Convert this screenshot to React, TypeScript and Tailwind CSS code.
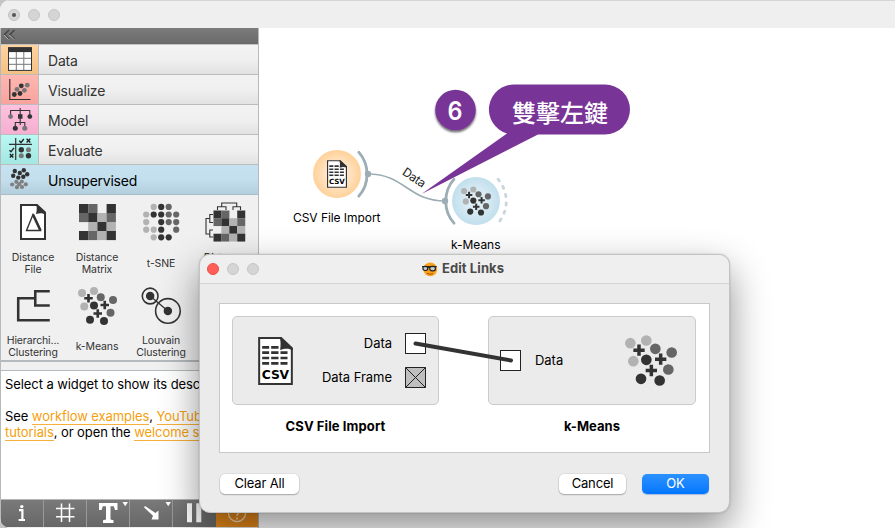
import React from "react";

const ui = "font-['Inter','Noto_Sans_CJK_TC',sans-serif]";

function KMeansIcon({ className }: { className: string }) {
  const dots: [number, number, string][] = [
    [482, 295, "#b2b2b2"], [530, 287, "#b2b2b2"], [491, 349, "#b2b2b2"],
    [557, 312, "#666"], [606, 323, "#666"], [596, 374, "#666"],
    [530, 345, "#333"], [514, 402, "#333"], [570, 407, "#333"],
  ];
  return (
    <svg viewBox="466 271 156 152" className={className}>
      {dots.map(([x, y, c]) => <circle key={`${x}-${y}`} cx={x} cy={y} r="16" fill={c} />)}
      <path d="M508 299v34M491 316h34M573 326v34M556 343h34M545 360v34M528 377h34" stroke="#333" strokeWidth="10.5" />
    </svg>
  );
}

function CsvIcon({ className }: { className: string }) {
  return (
    <svg viewBox="0 0 104 144" className={className}>
      <path d="M3 3H67L101 35V141H3Z" fill="#fff" stroke="#333" strokeWidth="6" />
      <path d="M64 0H70L104 32V40C92 33 80 34 66 39C68 24 68 10 64 0Z" fill="#333" />
      <path d="M12 31H33M39 31H61M12 47H33M39 47H61M67 47H88M12 63H33M39 63H61M67 63H88M12 79H33M39 79H61M67 79H88" stroke="#333" strokeWidth="8" />
      <text x="52" y="126" textAnchor="middle" textLength="82" fontFamily="DejaVu Sans" fontWeight="700" fontSize="37" fill="#000">CSV</text>
    </svg>
  );
}

function MatrixCells() {
  const rows = [
    ["#333", "#666", "", "#333"],
    ["#666", "#333", "#b2b2b2", "#666"],
    ["", "#b2b2b2", "#333", "#b2b2b2"],
    ["#333", "#666", "#b2b2b2", "#333"],
  ];
  return (
    <>
      {rows.flatMap((r, j) => r.map((c, i) => c && <rect key={`${i}${j}`} x={i * 9.2} y={j * 9} width="9.3" height="9.1" fill={c} />))}
    </>
  );
}

const DataIcon = () => (
  <svg width="37" height="29" viewBox="1 46 37 29">
    <rect x="8.5" y="48.8" width="23" height="22.6" fill="#fff" stroke="#333" />
    <rect x="8" y="48.3" width="24" height="4.8" fill="#333" />
    <path d="M16.3 53V71M23.8 53V71M9 59.3H31M9 65.3H31" stroke="#777" strokeWidth="1" />
  </svg>
);
const VisualizeIcon = () => (
  <svg width="37" height="29" viewBox="1 76 37 29">
    <path d="M9.8 80V100.5H30.5" fill="none" stroke="#333" strokeWidth="1.2" />
    {[[14.3, 95.5], [20, 94.5], [21.3, 86.8]].map(([x, y]) => <circle key={x} cx={x} cy={y} r="2.4" fill="#333" />)}
    {[[17, 90.3], [24.4, 91.3], [27.3, 86.2]].map(([x, y]) => <circle key={x} cx={x} cy={y} r="2.4" fill="#777" />)}
  </svg>
);
const ModelIcon = () => (
  <svg width="37" height="29" viewBox="1 106 37 29">
    <path d="M10.6 117V111.5H29.8V117M20.2 109V126M15.3 128V123.5H24.8V128" fill="none" stroke="#333" strokeWidth="1.1" />
    <rect x="18" y="115.2" width="4.5" height="4.5" fill="#333" />
    <circle cx="10.6" cy="117.6" r="2.4" fill="#777" />
    <circle cx="29.8" cy="117.6" r="2.4" fill="#333" />
    <circle cx="15.3" cy="129.2" r="2.5" fill="#333" />
    <circle cx="24.8" cy="129.2" r="2.5" fill="#777" />
  </svg>
);
const EvaluateIcon = () => (
  <svg width="37" height="29" viewBox="1 136 37 29">
    <path d="M15.7 139V161M9 145.3H32" stroke="#333" strokeWidth="1.2" />
    <path d="M19.3 141.8L21 143.6L23.8 140M26.6 139.8L30.3 143.4M30.3 139.8L26.6 143.4M9.5 151.3L11 152.8L14 148.8M9.8 155L13.3 158.6M13.3 155L9.8 158.6" fill="none" stroke="#222" strokeWidth="1.4" />
    <circle cx="21.3" cy="150.7" r="2.7" fill="#333" />
    <circle cx="28.5" cy="150.7" r="2.5" fill="#777" />
    <circle cx="21.3" cy="156.8" r="2.5" fill="#777" />
    <circle cx="28.5" cy="156.8" r="2.7" fill="#333" />
  </svg>
);
const UnsupervisedIcon = () => (
  <svg width="37" height="29" viewBox="1 166 37 29">
    {[[14.8, 172], [19.8, 174], [23.8, 171.2], [13.2, 176.8], [18.3, 178.6], [23.3, 177.8], [27.2, 175.2]].map(([x, y]) => <circle key={x} cx={x} cy={y} r="2.2" fill="#333" />)}
    {[[12.2, 185.5], [16.3, 182.8], [21.8, 182.5], [25.8, 185.3], [17, 188.2], [22, 188], [19.2, 185.2]].map(([x, y]) => <circle key={x} cx={x} cy={y} r="2.1" fill="#808080" />)}
  </svg>
);

const categories = [
  { label: "Data", icon: <DataIcon />, tile: "bg-linear-to-b from-[#ffd39f] to-[#f4c183]" },
  { label: "Visualize", icon: <VisualizeIcon />, tile: "bg-linear-to-b from-[#ffb7b1] to-[#f8a29d]" },
  { label: "Model", icon: <ModelIcon />, tile: "bg-linear-to-b from-[#ffc1df] to-[#f5aed0]" },
  { label: "Evaluate", icon: <EvaluateIcon />, tile: "bg-linear-to-b from-[#b9f7f2] to-[#a3e8e3]" },
];

function DistanceFile() {
  return (
    <svg width="44" height="44" viewBox="11 200 44 44">
      <path d="M21 205H37L45 212.5V239H21Z" fill="#fff" stroke="#333" strokeWidth="2" />
      <path d="M36 204L46 213V215C43 213 40 213 36 214C37 210 37 207 36 204Z" fill="#333" />
      <path d="M33 214.5L26.5 230.5H40.5Z" fill="none" stroke="#333" strokeWidth="1.4" />
      <path d="M33 214.5L40.5 230.5" stroke="#333" strokeWidth="2.6" />
    </svg>
  );
}
function DistanceMatrix() {
  return <svg width="44" height="44" viewBox="-4 -4 44 44"><MatrixCells /></svg>;
}
function Tsne() {
  const pts = ["02g 03d 04m", "11g 12d 13d 14m 15m", "21g 23d 24m 25m", "31g 32g 33d 35m", "42g 43d 44d"];
  const col: Record<string, string> = { g: "#b2b2b2", d: "#333", m: "#666" };
  return (
    <svg width="44" height="44" viewBox="139 200 44 44">
      {pts.flatMap((r) => r.split(" ").map((p) => (
        <circle key={p} cx={146.2 + (Number(p[1]) - 1) * 7.5} cy={206.9 + Number(p[0]) * 7.6} r="3.1" fill={col[p[2]]} />
      )))}
    </svg>
  );
}
function DistanceMap() {
  return (
    <svg width="44" height="44" viewBox="203 200 44 44">
      <g transform="translate(213.5 210.5) scale(.86)"><MatrixCells /></g>
      <path d="M217.5 210V206.8H226V210M233 210V206.8H240.5V210M221.7 206.8V203H236.7V206.8M213 214.5H209.8V222.5H213M213 230H209.8V237H213M209.8 218.5H206V234H209.8" fill="none" stroke="#333" strokeWidth="1.1" />
    </svg>
  );
}
function Hierarchical() {
  return (
    <svg width="44" height="44" viewBox="11 284 44 44">
      <path d="M50 291.3H35.3V305.8H50M35.3 298.5H18V320.7H50" fill="none" stroke="#333" strokeWidth="2.6" />
    </svg>
  );
}
function Louvain() {
  return (
    <svg width="44" height="44" viewBox="139 284 44 44">
      <circle cx="150" cy="296.2" r="8" fill="none" stroke="#333" strokeWidth="1.6" />
      <circle cx="168" cy="311.3" r="12.5" fill="none" stroke="#333" strokeWidth="1.6" />
      <path d="M150 296.2L168 311.3" stroke="#333" strokeWidth="1.3" />
      <circle cx="150" cy="296.2" r="4.3" fill="#333" />
      <circle cx="168" cy="311.3" r="4.3" fill="#333" />
    </svg>
  );
}

const widgets = [
  { label: ["Distance", "File"], icon: <DistanceFile /> },
  { label: ["Distance", "Matrix"], icon: <DistanceMatrix /> },
  { label: ["t-SNE"], icon: <Tsne /> },
  { label: ["Distance", "Map"], icon: <DistanceMap /> },
  { label: ["Hierarchi...", "Clustering"], icon: <Hierarchical /> },
  { label: ["k-Means"], icon: <div className="flex size-11 items-center justify-center"><KMeansIcon className="h-[38px] w-[39px]" /></div> },
  { label: ["Louvain", "Clustering"], icon: <Louvain /> },
];

function Sidebar() {
  const link = "text-[#f5a00f] border-b border-[#f7b03c]";
  return (
    <aside className="flex w-[259px] shrink-0 flex-col border-x border-[#b4babd] bg-[#f0f0f0]">
      <div className="h-4 shrink-0 bg-linear-to-b from-[#7c7c7c] to-[#696969]">
        <svg width="20" height="14" viewBox="0 0 20 14">
          <path d="M8 2L3.5 6.5L8 11M13.5 2L9 6.5L13.5 11" fill="none" stroke="#484848" strokeWidth="1.7" />
          <path d="M3 7L7.5 11.5M8.5 7L13 11.5" stroke="#bbb" strokeWidth="1" />
        </svg>
      </div>
      <div className="h-px shrink-0 bg-[#c2c2c2]" />
      {categories.map((c) => (
        <div key={c.label} className="flex h-[30px] shrink-0 border-b border-[#bcbcbc]">
          <div className={`w-[38px] border-r border-[#bcbcbc] ${c.tile}`}>{c.icon}</div>
          <div className="flex flex-1 items-center bg-linear-to-b from-[#f3f3f3] via-[#f0f0f0] to-[#e2e2e2] pl-[9px] pt-px text-[14px] tracking-[-0.22px] text-[#333]">{c.label}</div>
        </div>
      ))}
      <div className="flex h-[30px] shrink-0 items-center border-b border-[#a9bdc8] bg-linear-to-b from-[#c6e2f1] via-[#c3dfee] to-[#b3cedd] text-[14px] tracking-[-0.25px]">
        <UnsupervisedIcon />
        <span className="pl-[10px] pt-px">Unsupervised</span>
      </div>
      <div className="grid h-[167px] shrink-0 grid-cols-[repeat(4,64px)] grid-rows-[84px_81px] border-b-2 border-[#b4babd]">
        {widgets.map((w) => (
          <div key={w.label.join()} className="flex flex-col items-center pt-[5px]">
            {w.icon}
            <div className="mt-[7px] flex h-[26px] flex-col justify-center text-center text-[10.5px] leading-[12px] tracking-[-0.12px] text-[#333]">
              {w.label.map((l) => <span key={l} className="whitespace-nowrap">{l}</span>)}
            </div>
          </div>
        ))}
      </div>
      <div className="h-[9px] shrink-0 border-b border-[#b4babd]" />
      <div className="h-[128px] shrink-0 whitespace-nowrap bg-white pl-[4px] pt-[5px] text-[13px] leading-4 tracking-[-0.08px]">
        <p>Select a widget to show its description.</p>
        <p className="pt-4">See <span className={link}>workflow examples</span>, <span className={link}>YouTube</span></p>
        <p><span className={link}>tutorials</span>, or open the <span className={link}>welcome screen</span>.</p>
      </div>
      <svg className="h-[29px] w-[257px] shrink-0" viewBox="1 499 257 29">
        <defs>
          <linearGradient id="tool" x1="0" y1="0" x2="0" y2="1"><stop stopColor="#7a7a7a" /><stop offset="1" stopColor="#676767" /></linearGradient>
        </defs>
        <path d="M0 499.5H258V527H0Z" fill="url(#tool)" />
        <rect x="216" y="499.5" width="42" height="27.5" fill="#e6891a" />
        <path d="M43.5 500V527M86.5 500V527M129.5 500V527M172.5 500V527" stroke="#999" strokeWidth="1" />
        <path d="M19 510.2H22.4V520M18.6 520H25" fill="none" stroke="#fff" strokeWidth="2.2" />
        <circle cx="21.8" cy="506.6" r="1.7" fill="#fff" />
        <path d="M61.5 503.5V522M69.5 503.5V522M56 508.5H74.5M56 516.8H74.5" stroke="#fff" strokeWidth="1.5" />
        <path d="M99 503H117.5V510H115L113.8 506.2H110.5V519.5L113.5 520.2V523H103V520.2L106 519.5V506.2H102.8L101.6 510H99Z" fill="#fff" />
        <path d="M122.5 502H128L125.2 506.3ZM165.5 502H171L168.2 506.3ZM151.5 519.5H158.5V510.5L155.5 513L145 506L144 507.3L153 515.8Z" fill="#fff" />
        <path d="M187 503.3H192V522.3H187ZM196.3 503.3H201.3V522.3H196.3Z" fill="#fff" />
        <circle cx="237" cy="513" r="8.6" fill="none" stroke="#f8ddb8" strokeWidth="1.3" />
        <path d="M234 511C234 507 240 507 240 511C240 513 237 513 237 516M237 517.5V519.5" fill="none" stroke="#f8ddb8" strokeWidth="1.6" />
      </svg>
    </aside>
  );
}

function Workflow() {
  return (
    <div className="relative flex-1 bg-white">
      <svg width="636" height="500" viewBox="259 28 636 500" className="absolute left-0 top-0">
        <defs>
          <radialGradient id="orange"><stop stopColor="#fff1df" /><stop offset=".45" stopColor="#ffe6c8" /><stop offset="1" stopColor="#ffd199" /></radialGradient>
          <radialGradient id="blue"><stop stopColor="#e7f3f9" /><stop offset=".45" stopColor="#d9ebf4" /><stop offset="1" stopColor="#c1dfed" /></radialGradient>
          <filter id="drop" x="-20%" y="-20%" width="150%" height="150%"><feDropShadow dx="0" dy="2" stdDeviation="1" floodColor="#000" floodOpacity=".6" /></filter>
        </defs>
        <circle cx="337" cy="174" r="24" fill="url(#orange)" />
        <circle cx="476" cy="201" r="24" fill="url(#blue)" />
        <g fill="none" stroke="#9cadb5" strokeLinecap="round">
          <path d="M368 174C405 174 408 201 445 201" strokeWidth="1.7" />
          <path d="M358.8 152.2A33.5 33.5 0 0 1 358.8 196.2M454 179.2A33.5 33.5 0 0 0 454 223.2" strokeWidth="2.8" />
          <path d="M498 179.2A33.5 33.5 0 0 1 498 223.2" stroke="#c8d5da" strokeWidth="2.8" strokeDasharray="2.3 6.2" />
        </g>
        <circle cx="368" cy="174" r="3.2" fill="#9cadb5" /><circle cx="445" cy="201" r="3.2" fill="#9cadb5" />
        <g fontFamily="Inter" fontSize="12" fill="#222">
          <text x="293" y="222.4" textLength="87.5" fill="#000">CSV File Import</text>
          <text x="451" y="249.4" textLength="49.5" fill="#000">k-Means</text>
          <text transform="translate(401.5 174) rotate(34)" fontSize="12" textLength="25">Data</text>
        </g>
        <path d="M515 84.5H605A25 25 0 0 1 605 134.5H538L421.5 194L507 133.5A25 25 0 0 1 515 84.5Z" fill="#783597" />
        <text x="560" y="121.5" textAnchor="middle" fontFamily="Noto Sans CJK TC" fontWeight="500" fontSize="24" textLength="96" fill="#fff">雙擊左鍵</text>
        <circle cx="455.5" cy="110" r="20.3" fill="#783597" filter="url(#drop)" />
        <text x="455" y="120" textAnchor="middle" fontFamily="Inter" fontWeight="600" fontSize="25.5" textLength="15" lengthAdjust="spacingAndGlyphs" fill="#fff">6</text>
      </svg>
      <CsvIcon className="absolute left-[68px] top-[132px] h-7 w-5" />
      <KMeansIcon className="absolute left-[202px] top-[158px] h-[30px] w-[30px]" />
    </div>
  );
}

function Dialog() {
  const btn = "flex h-[20px] items-center justify-center rounded-[5px] bg-white text-[13px] tracking-[-0.15px] shadow-[0_0_0_0.5px_rgba(0,0,0,0.1),0_1px_1.5px_rgba(0,0,0,0.25)]";
  return (
    <section className="absolute left-[199px] top-[254px] flex h-[259px] w-[531px] flex-col rounded-[11px] border border-[#c3c3c3] bg-[#ebebeb] shadow-[0_16px_38px_rgba(0,0,0,0.44),0_0_2px_rgba(0,0,0,0.2)]">
      <header className="flex h-[29px] shrink-0 items-center rounded-t-[10px] border-b border-[#d5d5d5] bg-[#efefef] pl-[7px]">
        <div className="flex w-[215px] gap-2">
          <span className="size-3 rounded-full border border-[#ed5147] bg-[#ff5f57]" />
          <span className="size-3 rounded-full border border-[#c6c6c6] bg-[#d5d5d5]" />
          <span className="size-3 rounded-full border border-[#c6c6c6] bg-[#d5d5d5]" />
        </div>
        <svg width="16" height="15" viewBox="0 0 16 15">
          <circle cx="8.3" cy="7.3" r="6.9" fill="#faa21c" />
          <path d="M5 11.2Q8 13.2 11 11.5" fill="none" stroke="#a75000" />
          <rect x=".9" y="4.3" width="4.8" height="4.2" rx="1.9" fill="#c4ccd0" stroke="#222" strokeWidth="1.2" />
          <rect x="7.8" y="4.3" width="5.6" height="4.5" rx="2" fill="#c4ccd0" stroke="#222" strokeWidth="1.2" />
          <path d="M0 4.6H14.8M6 5.4H8" stroke="#222" strokeWidth="1" />
        </svg>
        <h1 className="pl-[4px] text-[13px] font-bold tracking-[0.08px] text-[#4a4a4a]">Edit Links</h1>
      </header>
      <div className="relative mx-[19px] mt-[19px] flex h-[150px] shrink-0 justify-between border border-[#c8c8c8] bg-white pl-[12px] pr-[13px] pt-[12px]">
        <div className="flex w-[207px] flex-col items-center">
          <div className="flex h-[89px] w-full rounded-[5px] border border-[#cbcbcb] bg-[#ebebeb] pl-[25px] pr-[12px]">
            <CsvIcon className="mt-[20px] h-[48px] w-[35px]" />
            <div className="flex flex-1 flex-col items-end gap-[13px] pt-4 text-[13px] tracking-[-0.04px]">
              <div className="flex h-[21px] items-center gap-[13px]">Data<span className="size-[21px] border border-[#222] bg-white" /></div>
              <div className="flex h-[21px] items-center gap-[13px]">Data Frame
                <svg width="21" height="21"><path d="M.5.5H20.5V20.5H.5ZL20.5 20.5M20.5.5L.5 20.5" fill="#bfbfbf" stroke="#222" /></svg>
              </div>
            </div>
          </div>
          <strong className="mt-[11px] text-[13px] leading-5 tracking-[0.1px]">CSV File Import</strong>
        </div>
        <div className="flex w-[208px] flex-col items-center">
          <div className="flex h-[89px] w-full items-center rounded-[5px] border border-[#cbcbcb] bg-[#ebebeb] pl-[11px] pr-[18px]">
            <span className="size-[21px] border border-[#222] bg-white" />
            <span className="flex-1 pl-[14px] text-[13px] tracking-[-0.04px]">Data</span>
            <KMeansIcon className="h-[51px] w-[52px]" />
          </div>
          <strong className="mt-[11px] text-[13px] leading-5 tracking-[0.06px]">k-Means</strong>
        </div>
        <svg className="absolute left-0 top-0" width="488" height="148" viewBox="220 304 488 148">
          <path d="M415.5 343.5L511 360.5" stroke="#333" strokeWidth="4" strokeLinecap="round" />
        </svg>
      </div>
      <footer className="flex px-5 pt-[21px]">
        <button className={`${btn} w-[79px]`}>Clear All</button>
        <button className={`${btn} ml-auto w-[67px]`}>Cancel</button>
        <button className="ml-4 flex h-[20px] w-[67px] items-center justify-center rounded-[5px] bg-linear-to-b from-[#2b91ff] to-[#0077ff] text-[13px] text-white shadow-[0_1px_1px_rgba(0,80,200,0.3)]">OK</button>
      </footer>
    </section>
  );
}

export default function App() {
  return (
    <div className={`h-[528px] w-[895px] overflow-hidden bg-[#c4c4c4] ${ui}`}>
      <main className="relative flex h-[528px] w-[895px] flex-col overflow-hidden rounded-l-[10px] bg-white text-black">
        <header className="flex h-7 shrink-0 items-center gap-2 border-t border-[#d5d5d5] bg-[#efefef] pl-2">
          <span className="flex size-3 items-center justify-center rounded-full border border-[#c2c2c2] bg-[#d5d5d5]"><i className="size-1 rounded-full bg-[#555]" /></span>
          <span className="size-3 rounded-full border border-[#c6c6c6] bg-[#d5d5d5]" />
          <span className="size-3 rounded-full border border-[#c6c6c6] bg-[#d5d5d5]" />
        </header>
        <div className="flex h-[500px]">
          <Sidebar />
          <Workflow />
        </div>
        <Dialog />
      </main>
    </div>
  );
}
